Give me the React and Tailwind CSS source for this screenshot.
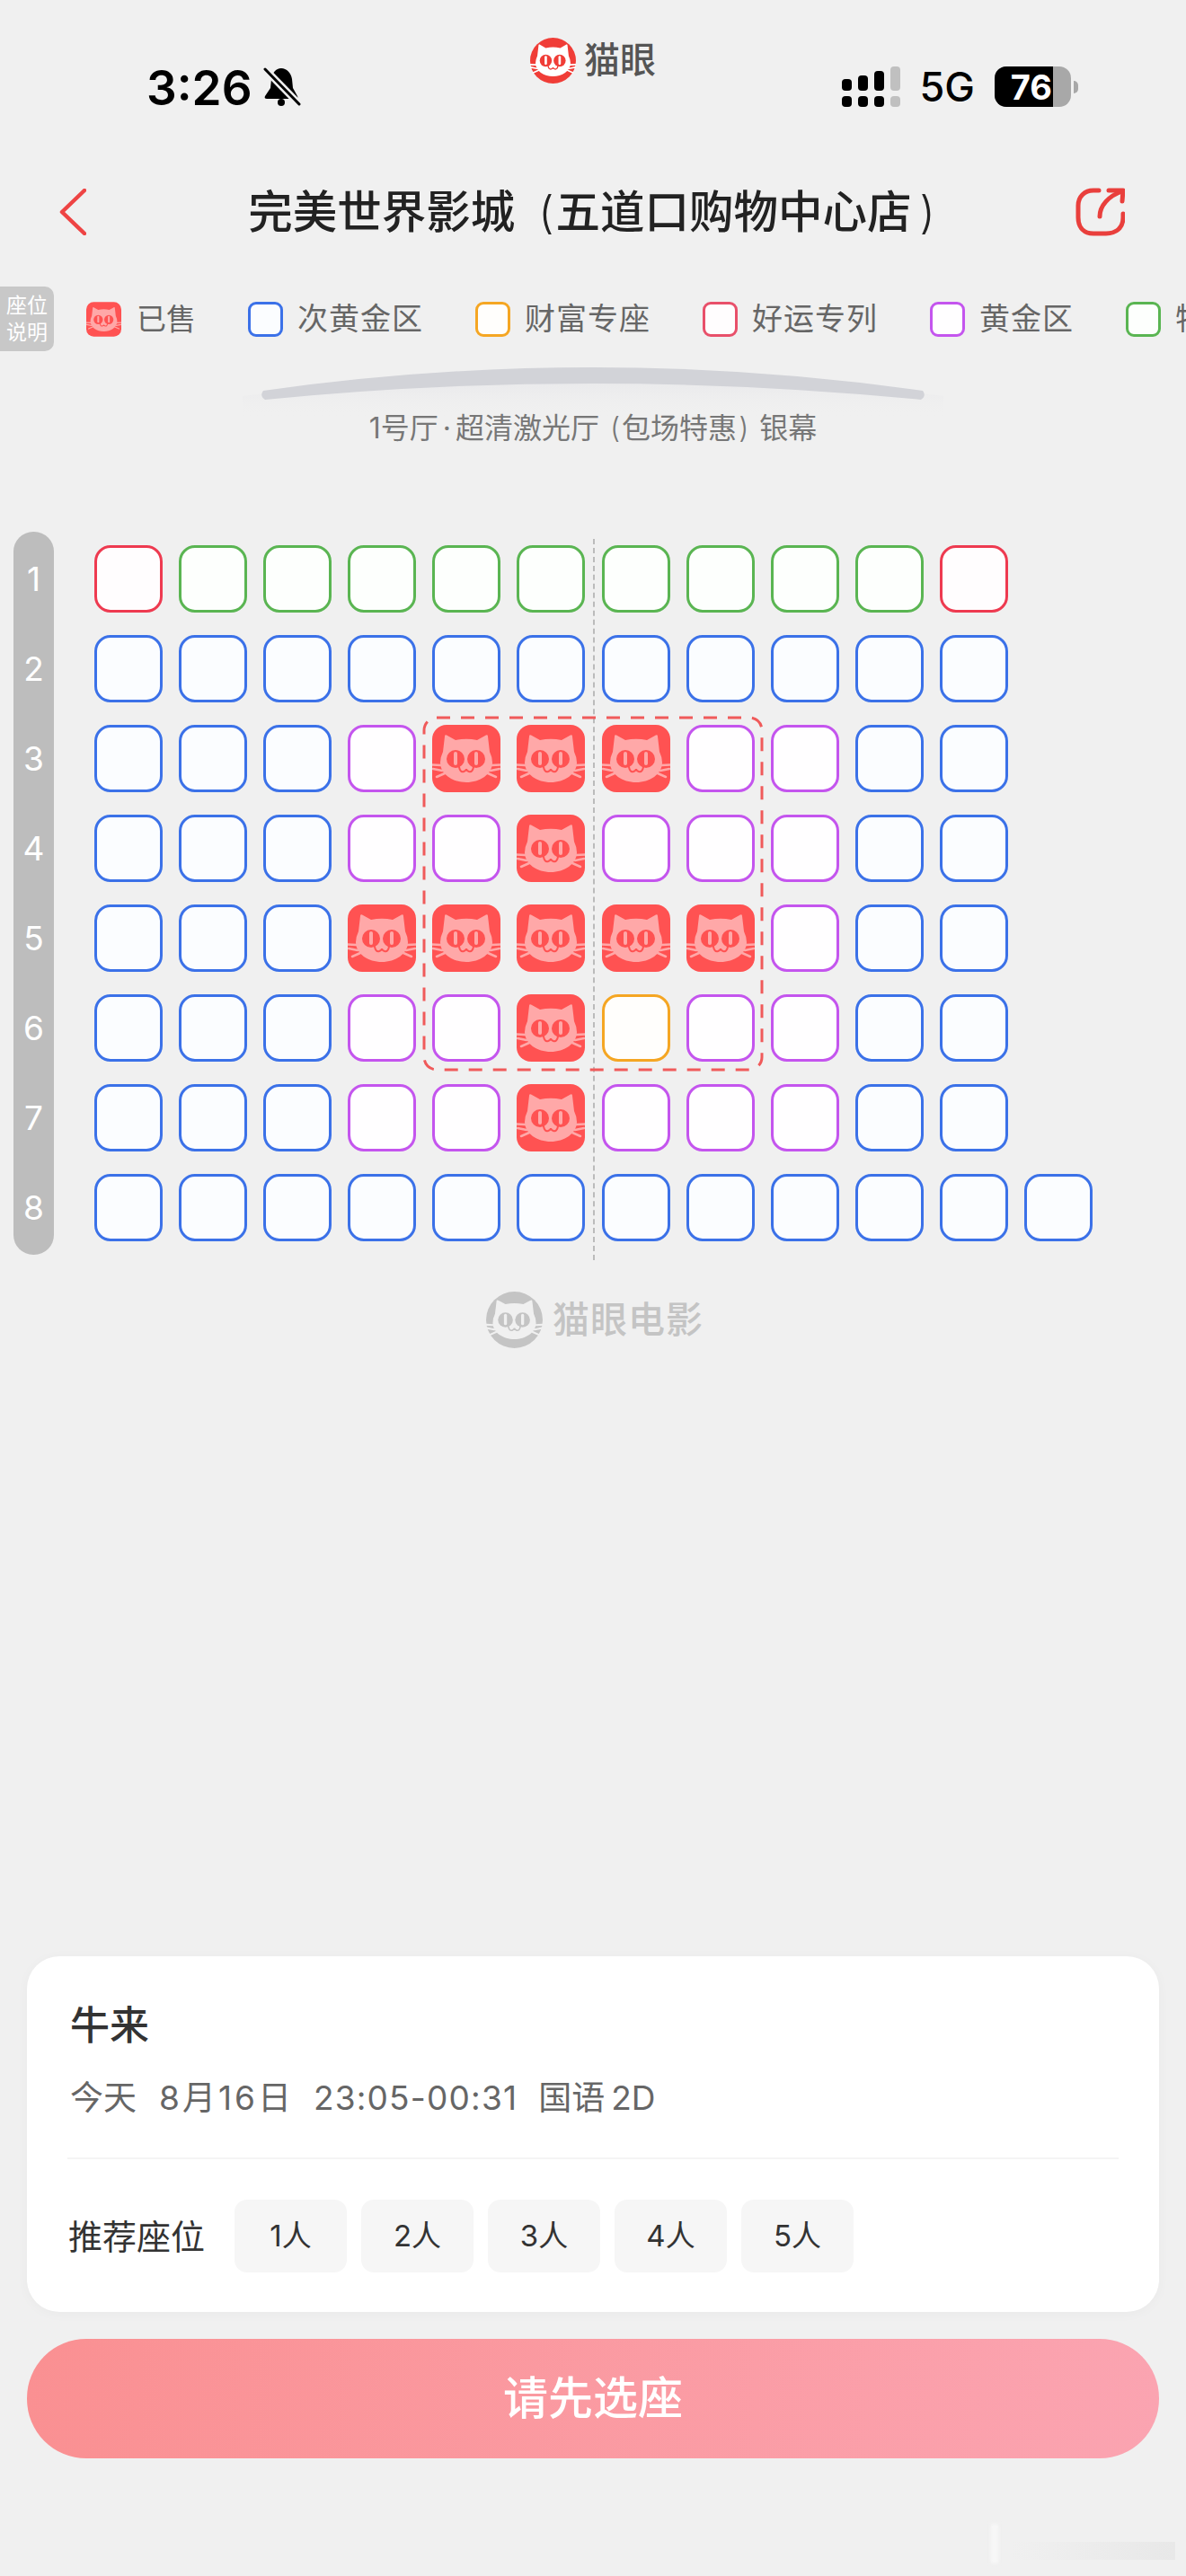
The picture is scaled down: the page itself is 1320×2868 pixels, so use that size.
import React from 'react';

const rows = [
  'RGGGGGGGGGR',
  'BBBBBBBBBBB',
  'BBBPSSSPPBB',
  'BBBPPSPPPBB',
  'BBBSSSSSPBB',
  'BBBPPSOPPBB',
  'BBBPPSPPPBB',
  'BBBBBBBBBBBB',
];

const seatStyles = {
  B: 'border-[#3b71e8] bg-[#fbfdff]',
  G: 'border-[#5ab552] bg-[#fdfffd]',
  R: 'border-[#ee3a50] bg-[#fffdfe]',
  P: 'border-[#c455ee] bg-[#fffeff]',
  O: 'border-[#f5a623] bg-[#fffefc]',
};

const legend = [
  { label: '次黄金区', color: 'border-[#3b71e8] bg-[#fbfdff]' },
  { label: '财富专座', color: 'border-[#f5a623] bg-[#fffefc]' },
  { label: '好运专列', color: 'border-[#e8506a] bg-[#fffdfe]' },
  { label: '黄金区', color: 'border-[#c455ee] bg-[#fffeff]' },
  { label: '特惠区', color: 'border-[#5ab552] bg-[#fdfffd]' },
];

const CatFace = ({ head, eye, whisker = head }) => (
  <>
    <path
      d="M14 13 C14 11 15.500 11 17 12 L26 17 Q38 14.500 50 17 L59 12 C60.500 11 62 11 62 13 L64 30 Q67 36 67 42 C67 55 53 64 38 64 C23 64 9 55 9 42 Q9 36 12 30 Z"
      fill={head}
    />
    <circle cx="26" cy="38" r="10" fill={eye} />
    <circle cx="49" cy="38" r="10" fill={eye} />
    <rect x="24" y="30" width="4" height="15" rx="2" fill={head} />
    <rect x="47" y="30" width="4" height="15" rx="2" fill={head} />
    <path
      d="M30 47 Q31 53 35 52 Q38 51 38 49 Q38 51 41 52 Q45 53 46 47"
      fill="none"
      stroke={eye}
      strokeWidth="2"
      strokeLinecap="round"
    />
    <path
      d="M0 44.500 L10 45 M1 49 L11 51 M5 58 L14 54 M76 44.500 L66 45 M75 49 L65 51 M71 58 L62 54"
      stroke={whisker}
      strokeWidth="2.500"
      strokeLinecap="round"
    />
  </>
);

const SoldIcon = ({ className }) => (
  <svg viewBox="0 0 76 75" className={className}>
    <rect width="76" height="75" rx="16" fill="#ff5252" />
    <CatFace head="#ffa8a8" eye="#ff5252" />
  </svg>
);

const RoundLogo = ({ className, bg, head, eye }) => (
  <svg viewBox="0 0 76 76" className={className}>
    <circle cx="38" cy="38" r="38" fill={bg} />
    <CatFace head={head} eye={eye} />
  </svg>
);

const Signal = () => (
  <div className="flex items-end gap-[7px]">
    {[13, 17, 22, 27].map((h, i) => (
      <div key={h} className="flex flex-col gap-[6px]">
        <div
          className={`w-[11px] rounded-[4px] ${i === 3 ? 'bg-[#c0c0c0]' : 'bg-black'}`}
          style={{ height: h }}
        />
        <div className={`h-[12px] w-[11px] rounded-[4px] ${i === 3 ? 'bg-[#c0c0c0]' : 'bg-black'}`} />
      </div>
    ))}
  </div>
);

const Battery = () => (
  <div className="flex items-center">
    <div className="flex h-[45px] w-[85px] overflow-hidden rounded-[13px] bg-[#a8a8a8]">
      <div className="flex w-[65px] items-center justify-end bg-black pr-[1px] text-[38px] leading-none font-bold text-white">
        76
      </div>
    </div>
    <div className="ml-[3px] h-[14px] w-[5px] rounded-r-full bg-[#a8a8a8]" />
  </div>
);

const StatusBar = () => (
  <div className="grid h-[130px] grid-cols-[1fr_auto_1fr]">
    <div className="flex items-start gap-[11px] pt-[74px] pl-[163px]">
      <span className="text-[53px] leading-[48px] font-semibold text-black">3:26</span>
      <svg viewBox="0 0 43 44" className="h-[44px] w-[43px]">
        <path d="M21 2 C15 2 11 7 10 14 L9 24 L3 33 C2 35 3 36 5 36 H37 C39 36 40 35 39 33 L34 24 L33 14 C32 7 27 2 21 2Z" fill="#000" />
        <circle cx="21" cy="40" r="4" fill="#000" />
        <path d="M3 3 L41 42" stroke="#f0f0f0" strokeWidth="8" />
        <path d="M3 3 L41 42" stroke="#000" strokeWidth="3" strokeLinecap="round" />
      </svg>
    </div>
    <div className="flex items-start gap-[9px] pt-[42px]">
      <RoundLogo className="h-[51px] w-[51px]" bg="#f03d37" head="#ffffff" eye="#f03d37" />
      <span className="mt-[2px] text-[40px] leading-[46px] font-medium text-[#555555]">猫眼</span>
    </div>
    <div className="flex items-start justify-end gap-[22px] pt-[74px] pr-[120px]">
      <Signal />
      <span className="mt-[-1px] text-[45px] leading-[48px] font-medium text-black">5G</span>
      <Battery />
    </div>
  </div>
);

const NavBar = () => (
  <div className="mt-[76px] flex h-[60px] items-center justify-between pr-[68px] pl-[66px]">
    <svg viewBox="0 0 30 52" className="h-[52px] w-[30px]" fill="none">
      <path d="M28 2 L3 26 L28 50" stroke="#ee4444" strokeWidth="4.500" strokeLinecap="round" strokeLinejoin="round" />
    </svg>
    <h1 className="pl-[24px] text-[49.500px] leading-[60px] font-medium whitespace-nowrap text-[#222222]">
      完美世界影城<span className="mr-[2px] ml-[26px] font-light">(</span>五道口购物中心店<span className="ml-[9px] font-light">)</span>
    </h1>
    <svg viewBox="0 0 55 54" className="h-[54px] w-[55px]" fill="none" stroke="#e93f3c" strokeWidth="5" strokeLinecap="round" strokeLinejoin="round">
      <path d="M26 3 H20 C10 3 3 10 3 20 V33 C3 45 10 51 20 51 H34 C45 51 53 45 53 33 V29" />
      <path d="M27 32 C27 20 37 9 52 4" />
      <path d="M37 3 L53 3 L52 15" />
    </svg>
  </div>
);

const Legend = () => (
  <div className="mt-[53px] flex h-[72px] items-center overflow-hidden">
    <div className="flex h-[72px] w-[60px] shrink-0 flex-col items-center justify-center rounded-r-[10px] bg-[#c8c8c8] text-[23px] leading-[30px] text-white">
      <span>座位</span>
      <span>说明</span>
    </div>
    <div className="ml-[36px] flex shrink-0 items-center gap-[17px]">
      <SoldIcon className="h-[39px] w-[39px]" />
      <span className="text-[33px] leading-none text-[#666666]">已售</span>
    </div>
    {legend.map((item) => (
      <div key={item.label} className="ml-[58px] flex shrink-0 items-center gap-[16px]">
        <div className={`h-[39px] w-[39px] rounded-[9px] border-[3px] ${item.color}`} />
        <span className="text-[34px] leading-none tracking-[1px] text-[#666666]">{item.label}</span>
      </div>
    ))}
  </div>
);

const Screen = () => (
  <div className="mt-[14px] flex flex-col items-center">
    <svg viewBox="0 0 800 60" className="h-[60px] w-[800px]">
      <defs>
        <linearGradient id="glow" x1="0" y1="0" x2="0" y2="1">
          <stop offset="0" stopColor="#e2e2e6" stopOpacity="0.7" />
          <stop offset="1" stopColor="#f0f0f0" stopOpacity="0" />
        </linearGradient>
      </defs>
      <path d="M10 36 Q400 -14 790 36 L790 60 H10 Z" fill="url(#glow)" />
      <path
        d="M33 30 Q400 -22 767 30 C770 34 769 38 765 40 Q400 4 35 40 C31 38 30 34 33 30 Z"
        fill="#d2d3d8"
      />
    </svg>
    <p className="mt-[-8px] h-[40px] text-[32px] leading-[40px] whitespace-nowrap text-[#777777]">
      1号厅<span className="mx-[5px]">·</span>超清激光厅<span className="mr-[2px] ml-[12px] font-light">(</span>包场特惠<span className="mr-[12px] ml-[2px] font-light">)</span>银幕
    </p>
  </div>
);

const SeatMap = () => (
  <div className="relative mt-[95px] flex pl-[15px]">
    <div className="flex w-[45px] flex-col gap-[25px] rounded-[22px] bg-[#bdbdbd] pt-[15px] pb-[15px]">
      {rows.map((_, i) => (
        <div key={i} className="flex h-[75px] items-center justify-center text-[37px] leading-none font-normal text-white">
          {i + 1}
        </div>
      ))}
    </div>
    <div className="ml-[45px] flex flex-col gap-[25px] pt-[15px]">
      {rows.map((row, r) => (
        <div key={r} className="flex gap-[18.100px]">
          {row.split('').map((s, c) =>
            s === 'S' ? (
              <SoldIcon key={c} className="h-[75px] w-[76px]" />
            ) : (
              <div key={c} className={`h-[75px] w-[76px] rounded-[18px] border-[3.500px] ${seatStyles[s]}`} />
            ),
          )}
        </div>
      ))}
    </div>
    {/* centre line */}
    <div className="absolute top-[8px] left-[660px] h-[803px] border-l-2 border-dashed border-[#bbbbbb]" />
    {/* best seats zone */}
    <svg className="absolute top-[205px] left-[470px] h-[396px] w-[380px]" viewBox="0 0 380 396" fill="none">
      <rect x="2" y="2" width="376" height="392" rx="14" stroke="#f05a5a" strokeWidth="3" strokeDasharray="15 12" />
    </svg>
  </div>
);

const Watermark = () => (
  <div className="mt-[41px] ml-[541px] flex items-center gap-[11px]">
    <RoundLogo className="h-[63px] w-[63px]" bg="#c4c4c4" head="#f0f0f0" eye="#c4c4c4" />
    <span className="text-[41px] leading-none font-medium tracking-[1px] text-[#c4c4c4]">猫眼电影</span>
  </div>
);

const InfoCard = () => (
  <div className="mx-[30px] h-[396px] rounded-[36px] bg-white pt-[51px] shadow-[0_2px_14px_rgba(0,0,0,0.03)]">
    <div className="pl-[48px] text-[44px] leading-[52px] font-medium text-[#333333]">牛来</div>
    <div className="mt-[32px] flex pl-[48px] text-[37px] leading-[46px] whitespace-nowrap text-[#666666]">
      <span>今天</span>
      <span className="ml-[25px] tracking-[3px]">8月16日</span>
      <span className="ml-[22px] tracking-[1.200px]">23:05-00:31</span>
      <span className="ml-[23px]">国语</span>
      <span className="ml-[7px]">2D</span>
    </div>
    <div className="mx-[45px] mt-[43px] h-[2px] bg-[#f4f4f4]" />
    <div className="mt-[45px] flex items-center pl-[46px]">
      <span className="w-[185px] text-[38px] leading-none text-[#333333]">推荐座位</span>
      <div className="flex gap-[16px]">
        {[1, 2, 3, 4, 5].map((n) => (
          <div key={n} className="flex h-[81px] w-[125px] items-center justify-center rounded-[14px] bg-[#f6f6f6] text-[33px] text-[#333333]">
            {n}人
          </div>
        ))}
      </div>
    </div>
  </div>
);

export default function App() {
  return (
    <div className="relative flex h-[2868px] w-[1320px] flex-col overflow-hidden bg-[#f0f0f0] font-['Inter','Noto_Sans_CJK_SC',sans-serif]">
      <StatusBar />
      <NavBar />
      <Legend />
      <Screen />
      <SeatMap />
      <Watermark />
      <div className="flex-1" />
      <InfoCard />
      <button className="mx-[30px] mt-[30px] h-[133px] rounded-[66px] bg-gradient-to-r from-[#fa9092] to-[#fba4b1] text-[50px] font-medium text-white">
        请先选座
      </button>
      <div className="h-[131px]" />
      {/* faint image artefact, bottom right */}
      <div className="absolute top-[2830px] left-[1125px] h-[20px] w-[183px] bg-gradient-to-r from-transparent to-[#e8e8e8]" />
      <div className="absolute top-[2810px] left-[1103px] h-[44px] w-[8px] bg-[#f8f8f8] blur-[2px]" />
    </div>
  );
}
